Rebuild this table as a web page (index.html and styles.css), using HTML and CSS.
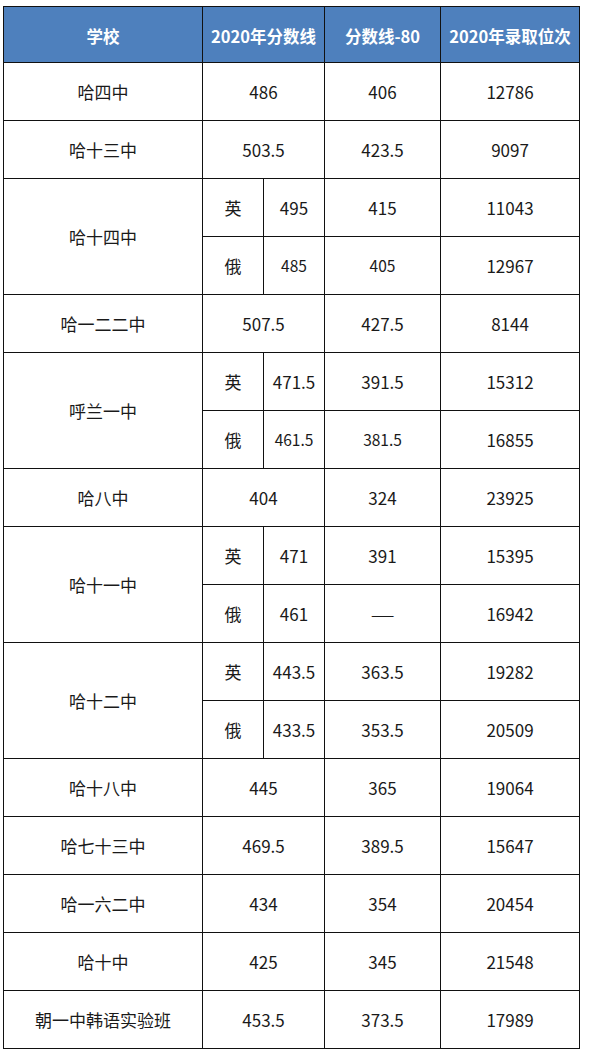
FILE: index.html
```html
<!DOCTYPE html>
<html lang="zh-CN">
<head>
<meta charset="utf-8">
<title>2020年分数线</title>
<link rel="stylesheet" href="styles.css">
</head>
<body>
<table class="score-table">
  <colgroup>
    <col class="c-school">
    <col class="c-lang">
    <col class="c-score">
    <col class="c-minus">
    <col class="c-rank">
  </colgroup>
  <thead>
    <tr>
      <th>学校</th>
      <th colspan="2">2020年分数线</th>
      <th>分数线-80</th>
      <th>2020年录取位次</th>
    </tr>
  </thead>
  <tbody>
    <tr><td>哈四中</td><td colspan="2">486</td><td>406</td><td>12786</td></tr>
    <tr><td>哈十三中</td><td colspan="2">503.5</td><td>423.5</td><td>9097</td></tr>
    <tr><td rowspan="2">哈十四中</td><td>英</td><td>495</td><td>415</td><td>11043</td></tr>
    <tr><td>俄</td><td class="small">485</td><td class="small">405</td><td>12967</td></tr>
    <tr><td>哈一二二中</td><td colspan="2">507.5</td><td>427.5</td><td>8144</td></tr>
    <tr><td rowspan="2">呼兰一中</td><td>英</td><td>471.5</td><td>391.5</td><td>15312</td></tr>
    <tr><td>俄</td><td class="small">461.5</td><td class="small">381.5</td><td>16855</td></tr>
    <tr><td>哈八中</td><td colspan="2">404</td><td>324</td><td>23925</td></tr>
    <tr><td rowspan="2">哈十一中</td><td>英</td><td>471</td><td>391</td><td>15395</td></tr>
    <tr><td>俄</td><td>461</td><td><span class="dash">—</span></td><td>16942</td></tr>
    <tr><td rowspan="2">哈十二中</td><td>英</td><td>443.5</td><td>363.5</td><td>19282</td></tr>
    <tr><td>俄</td><td>433.5</td><td>353.5</td><td>20509</td></tr>
    <tr><td>哈十八中</td><td colspan="2">445</td><td>365</td><td>19064</td></tr>
    <tr><td>哈七十三中</td><td colspan="2">469.5</td><td>389.5</td><td>15647</td></tr>
    <tr><td>哈一六二中</td><td colspan="2">434</td><td>354</td><td>20454</td></tr>
    <tr><td>哈十中</td><td colspan="2">425</td><td>345</td><td>21548</td></tr>
    <tr><td>朝一中韩语实验班</td><td colspan="2">453.5</td><td>373.5</td><td>17989</td></tr>
  </tbody>
</table>
</body>
</html>
```

FILE: styles.css
```css
html, body {
  margin: 0;
  padding: 0;
  background: #ffffff;
}

body {
  padding: 6px 0 0 3px;
  font-family: "Noto Sans CJK SC", "Noto Sans", sans-serif;
  color: #1a1a1a;
}

.score-table {
  border-collapse: collapse;
  table-layout: fixed;
  width: 576px;
}

.c-school { width: 199px; }
.c-lang { width: 61px; }
.c-score { width: 61px; }
.c-minus { width: 116px; }
.c-rank { width: 139px; }

.score-table th,
.score-table td {
  border: 1.5px solid #111111;
  text-align: center;
  vertical-align: middle;
  padding: 0;
}

.score-table th {
  height: 53px;
  background: #4e80bd;
  color: #ffffff;
  font-size: 16.5px;
  font-weight: 700;
  padding-top: 2px;
}

.score-table td {
  height: 57px;
  font-size: 17px;
  font-weight: 400;
  line-height: 1;
}

.score-table td.small {
  font-size: 15.5px;
}

.dash {
  display: inline-block;
  transform: scaleX(1.6);
}
```
